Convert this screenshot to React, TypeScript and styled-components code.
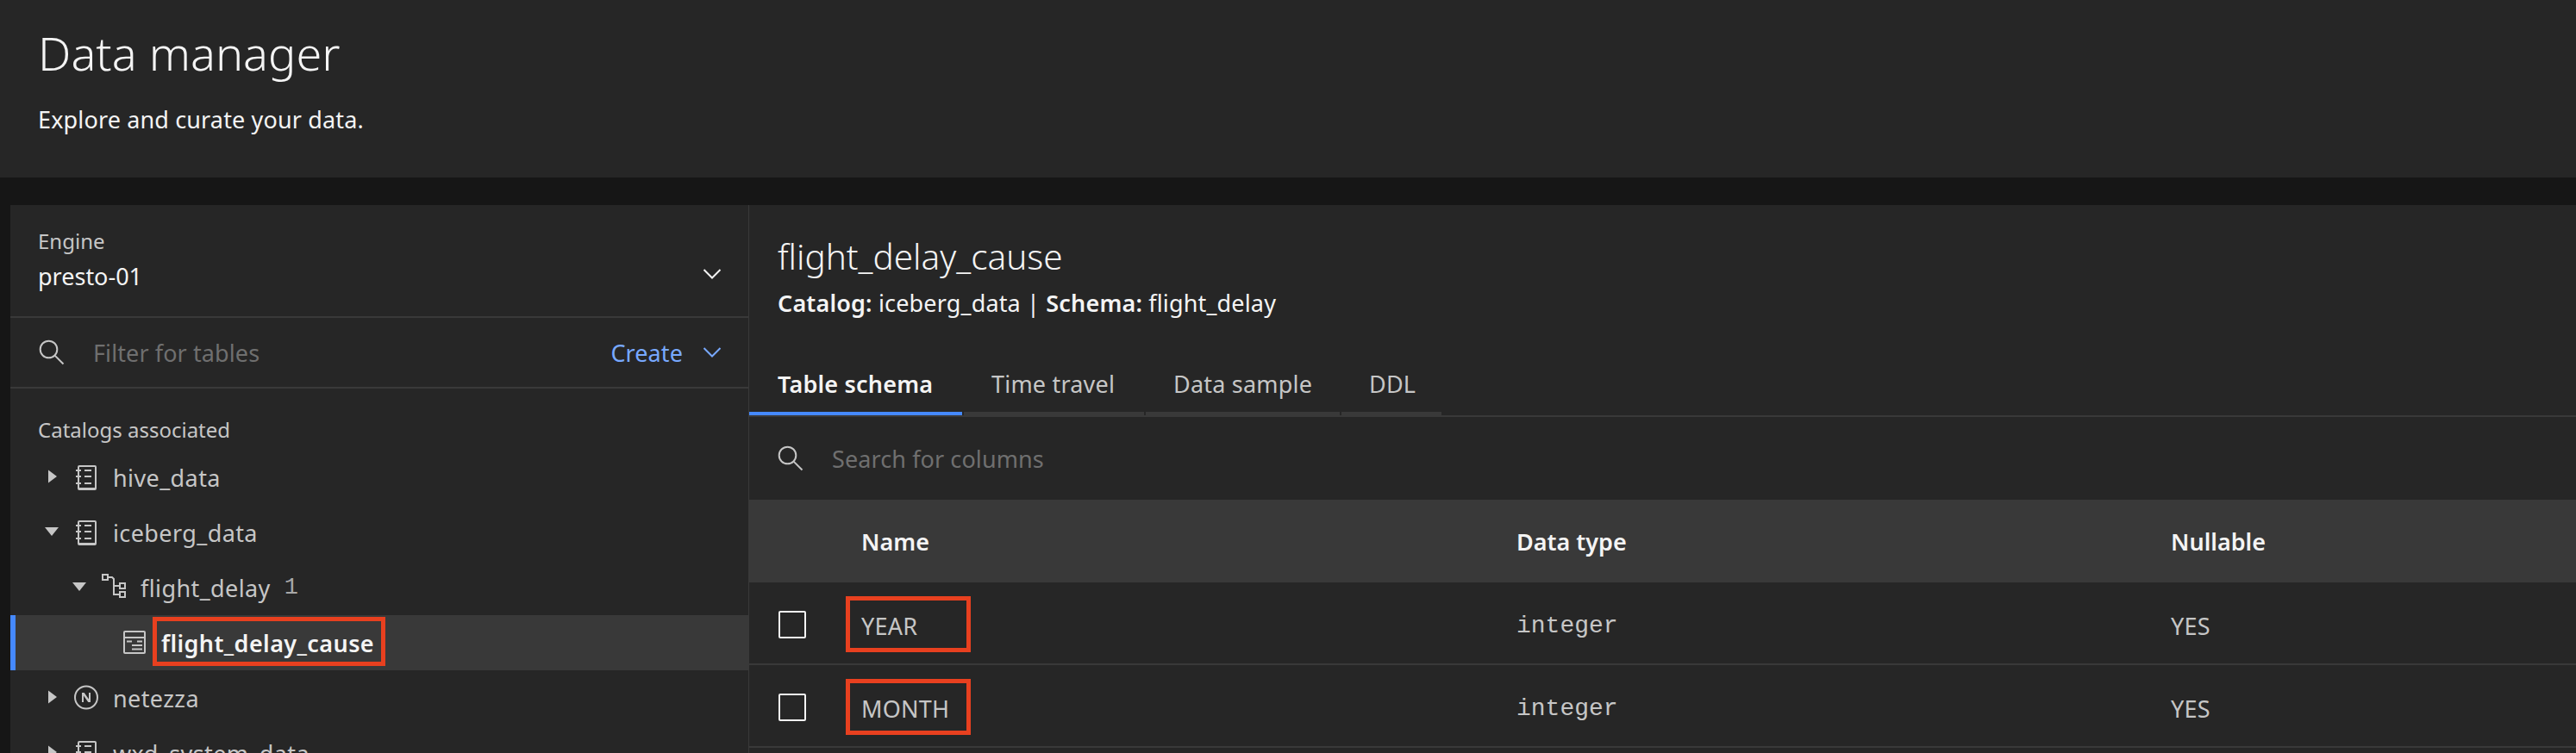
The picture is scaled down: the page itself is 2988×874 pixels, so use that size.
import { FC } from 'react';
import styled, { createGlobalStyle } from 'styled-components';

const GlobalStyle = createGlobalStyle`
  html, body {
    margin: 0;
    padding: 0;
    background: #161616;
  }
  * {
    box-sizing: border-box;
  }
`;

const sans = `'Noto Sans', 'Open Sans', sans-serif`;
const mono = `'Liberation Mono', 'DejaVu Sans Mono', monospace`;

const Page = styled.div`
  width: 2988px;
  height: 874px;
  overflow: hidden;
  background: #161616;
  font-family: ${sans};
  color: #f4f4f4;
`;

const Header = styled.header`
  height: 206px;
  padding: 29px 44px 0;
  background: #262626;
`;

const PageTitle = styled.h1`
  margin: 0;
  font-size: 54px;
  line-height: 64px;
  font-weight: 300;
`;

const PageSubtitle = styled.p`
  margin: 28px 0 0;
  font-size: 27px;
  line-height: 36px;
  letter-spacing: 0.14px;
`;

const Body = styled.div`
  display: flex;
  height: 636px;
  margin-top: 32px;
  padding-left: 12px;
`;

const Sidebar = styled.aside`
  flex: none;
  width: 857px;
  background: #262626;
  border-right: 1px solid #393939;
  overflow: hidden;
`;

const EngineBox = styled.div`
  display: flex;
  align-items: flex-start;
  justify-content: space-between;
  height: 131px;
  padding: 26px 26px 0 32px;
  border-bottom: 2px solid #393939;
`;

const EngineLabel = styled.div`
  font-size: 24px;
  line-height: 32px;
  color: #c6c6c6;
`;

const EngineValue = styled.div`
  margin-top: 7px;
  font-size: 27px;
  line-height: 36px;
`;

const Chevron = styled.svg<{ $color: string; $offset?: number }>`
  flex: none;
  width: 32px;
  height: 32px;
  margin-top: ${p => p.$offset ?? 0}px;
  fill: none;
  stroke: ${p => p.$color};
  stroke-width: 2;
`;

const FilterBar = styled.div`
  display: flex;
  align-items: center;
  height: 82px;
  padding: 0 26px 0 32px;
  border-bottom: 2px solid #393939;
`;

const SearchGlyph = styled.svg`
  flex: none;
  width: 32px;
  height: 32px;
  fill: none;
  stroke: #c6c6c6;
  stroke-width: 2;
`;

const Placeholder = styled.span`
  margin-left: 32px;
  font-size: 27px;
  letter-spacing: 0.1px;
  color: #6f6f6f;
`;

const CreateButton = styled.div`
  display: flex;
  align-items: center;
  gap: 18px;
  margin-left: auto;
  font-size: 27px;
  letter-spacing: 0.1px;
  color: #78a9ff;
`;

const TreeTitle = styled.div`
  height: 71px;
  padding: 32px 32px 0;
  font-size: 24px;
  line-height: 32px;
  color: #c6c6c6;
`;

const TreeRow = styled.div<{ $depth: number; $selected?: boolean }>`
  position: relative;
  display: flex;
  align-items: center;
  height: 64px;
  padding-left: ${p => 32 + p.$depth * 32}px;
  font-size: 27px;
  letter-spacing: 0.4px;
  white-space: nowrap;
  color: ${p => (p.$selected ? '#f4f4f4' : '#c6c6c6')};
  font-weight: ${p => (p.$selected ? 600 : 400)};
  background: ${p => (p.$selected ? '#393939' : 'transparent')};
  box-shadow: ${p => (p.$selected ? 'inset 6px 0 0 #4589ff' : 'none')};
`;

const Caret = styled.svg`
  flex: none;
  width: 32px;
  height: 32px;
  fill: #c6c6c6;
`;

const CaretSpacer = styled.span`
  flex: none;
  width: 24px;
`;

const NodeIcon = styled.svg`
  flex: none;
  width: 32px;
  height: 32px;
  margin: 0 15px 0 8px;
  color: #c6c6c6;
`;

const Count = styled.span`
  margin-left: 16px;
  font-family: ${mono};
  font-size: 27px;
  letter-spacing: 0;
  color: #a8a8a8;
`;

const Callout = styled.div<{ $left: number; $top: number; $width: number; $height: number }>`
  position: absolute;
  left: ${p => p.$left}px;
  top: ${p => p.$top}px;
  width: ${p => p.$width}px;
  height: ${p => p.$height}px;
  border: 5px solid #e8401f;
`;

const Main = styled.main`
  flex: 1;
  min-width: 0;
  background: #262626;
`;

const TitleBlock = styled.div`
  height: 192px;
  padding: 36px 33px 0;
`;

const TableName = styled.h2`
  margin: 0;
  font-size: 40.5px;
  line-height: 48px;
  font-weight: 300;
`;

const TableMeta = styled.div`
  margin-top: 12px;
  font-size: 27px;
  line-height: 36px;
  letter-spacing: 0.16px;

  b {
    font-weight: 600;
  }
`;

const Tabs = styled.nav`
  display: flex;
  height: 54px;
  border-bottom: 2px solid #393939;
`;

const Tab = styled.div<{ $active?: boolean; $width: number }>`
  width: ${p => p.$width}px;
  height: 52px;
  margin-right: 2px;
  padding-left: ${p => (p.$active ? 33 : 32)}px;
  font-size: 27px;
  line-height: 32px;
  letter-spacing: 0.2px;
  white-space: nowrap;
  font-weight: ${p => (p.$active ? 600 : 400)};
  color: ${p => (p.$active ? '#f4f4f4' : '#c6c6c6')};
  border-bottom: 4px solid ${p => (p.$active ? '#4589ff' : '#393939')};
`;

const ColumnSearch = styled.div`
  display: flex;
  align-items: center;
  height: 96px;
  padding: 0 32px;
`;

const grid = `
  display: grid;
  grid-template-columns: 130px 760px 759px 1fr;
  align-items: center;
`;

const HeadRow = styled.div`
  ${grid}
  height: 96px;
  background: #393939;
  font-size: 27px;
  font-weight: 600;
`;

const Row = styled.div`
  ${grid}
  height: 96px;
  border-bottom: 2px solid #393939;
  font-size: 27px;
  letter-spacing: 0.2px;
  color: #c6c6c6;
`;

const CheckCell = styled.div`
  padding: 4px 0 0 34px;
`;

const Checkbox = styled.span`
  display: block;
  width: 32px;
  height: 32px;
  border: 2px solid #f4f4f4;
  border-radius: 2px;
`;

const NameCell = styled.div`
  position: relative;
  align-self: stretch;
  display: flex;
  align-items: center;
  padding-top: 6px;
`;

const TypeCell = styled.div`
  padding-top: 6px;
  font-family: ${mono};
  font-size: 28px;
  letter-spacing: 0;
`;

const ValueCell = styled.div`
  padding-top: 6px;
`;

const Magnifier: FC = () => (
  <SearchGlyph viewBox="0 0 32 32">
    <circle cx="12.5" cy="12.5" r="9.8" />
    <path d="M19.6 19.6 29.5 29.5" />
  </SearchGlyph>
);

const ChevronDown: FC<{ color: string; offset?: number }> = ({ color, offset }) => (
  <Chevron $color={color} $offset={offset} viewBox="0 0 32 32">
    <path d="M6.5 11 16 20.5 25.5 11" />
  </Chevron>
);

const CaretRight: FC = () => (
  <Caret viewBox="0 0 32 32"><path d="M12 7.5 22 15 12 22.5z" /></Caret>
);

const CaretDown: FC = () => (
  <Caret viewBox="0 0 32 32"><path d="M8 10h16l-8 10z" /></Caret>
);

const CatalogIcon: FC = () => (
  <NodeIcon viewBox="0 0 32 32" fill="currentColor">
    <path d="M26 2H8a2 2 0 0 0-2 2v3H4v2h2v5H4v2h2v6H4v2h2v5a2 2 0 0 0 2 2h18a2 2 0 0 0 2-2V4a2 2 0 0 0-2-2Zm0 26H8v-4h2v-2H8v-6h2v-2H8V9h2V7H8V4h18Z" />
    <path d="M14 7h8v2h-8zM14 14h8v2h-8zM14 22h8v2h-8z" />
  </NodeIcon>
);

const SchemaIcon: FC = () => (
  <NodeIcon viewBox="0 0 32 32" fill="none" stroke="currentColor" strokeWidth="2">
    <rect x="3" y="1" width="6" height="6" />
    <rect x="23" y="11" width="6" height="6" />
    <rect x="23" y="21" width="6" height="6" />
    <path d="M9 4h5l2 2v18h7M16 14h7" />
  </NodeIcon>
);

const TableIcon: FC = () => (
  <NodeIcon viewBox="0 0 32 32" fill="currentColor">
    <path d="M27 2H5a2 2 0 0 0-2 2v23a2 2 0 0 0 2 2h22a2 2 0 0 0 2-2V4a2 2 0 0 0-2-2Zm0 2v5H5V4ZM5 27V11h22v16Z" />
    <path d="M7 13.5h6v2H7zM19 13.5h6v2h-6zM13 18h6v2h-6zM19 18h6v2h-6zM13 22.5h6v2h-6zM19 22.5h6v2h-6z" />
  </NodeIcon>
);

const NetezzaIcon: FC = () => (
  <NodeIcon viewBox="0 0 32 32" fill="currentColor">
    <path d="M16 1.5a14 14 0 1 0 14 14 14 14 0 0 0-14-14Zm0 26a12 12 0 1 1 12-12 12 12 0 0 1-12 12Z" />
    <path d="M19 10v7.6L13.7 10H11v11h2v-7.6l5.3 7.6H21V10z" />
  </NodeIcon>
);

export default function App() {
  return (
    <Page>
      <GlobalStyle />
      <Header>
        <PageTitle>Data manager</PageTitle>
        <PageSubtitle>Explore and curate your data.</PageSubtitle>
      </Header>
      <Body>
        <Sidebar>
          <EngineBox>
            <div>
              <EngineLabel>Engine</EngineLabel>
              <EngineValue>presto-01</EngineValue>
            </div>
            <ChevronDown color="#f4f4f4" offset={38} />
          </EngineBox>
          <FilterBar>
            <Magnifier />
            <Placeholder>Filter for tables</Placeholder>
            <CreateButton>
              Create
              <ChevronDown color="#78a9ff" />
            </CreateButton>
          </FilterBar>
          <TreeTitle>Catalogs associated</TreeTitle>
          <TreeRow $depth={0}><CaretRight /><CatalogIcon />hive_data</TreeRow>
          <TreeRow $depth={0}><CaretDown /><CatalogIcon />iceberg_data</TreeRow>
          <TreeRow $depth={1}><CaretDown /><SchemaIcon />flight_delay<Count>1</Count></TreeRow>
          <TreeRow $depth={2} $selected>
            <CaretSpacer />
            <TableIcon />flight_delay_cause
            <Callout $left={165} $top={2} $width={270} $height={57} />
          </TreeRow>
          <TreeRow $depth={0}><CaretRight /><NetezzaIcon />netezza</TreeRow>
          <TreeRow $depth={0}><CaretRight /><CatalogIcon />wxd_system_data</TreeRow>
        </Sidebar>
        <Main>
          <TitleBlock>
            <TableName>flight_delay_cause</TableName>
            <TableMeta><b>Catalog:</b> iceberg_data | <b>Schema:</b> flight_delay</TableMeta>
          </TitleBlock>
          <Tabs>
            <Tab $active $width={247}>Table schema</Tab>
            <Tab $width={209}>Time travel</Tab>
            <Tab $width={225}>Data sample</Tab>
            <Tab $width={116}>DDL</Tab>
          </Tabs>
          <ColumnSearch>
            <Magnifier />
            <Placeholder>Search for columns</Placeholder>
          </ColumnSearch>
          <HeadRow>
            <span />
            <span>Name</span>
            <span>Data type</span>
            <span>Nullable</span>
          </HeadRow>
          {['YEAR', 'MONTH'].map(name => (
            <Row key={name}>
              <CheckCell><Checkbox /></CheckCell>
              <NameCell>
                {name}
                <Callout $left={-18} $top={16} $width={145} $height={65} />
              </NameCell>
              <TypeCell>integer</TypeCell>
              <ValueCell>YES</ValueCell>
            </Row>
          ))}
        </Main>
      </Body>
    </Page>
  );
}
